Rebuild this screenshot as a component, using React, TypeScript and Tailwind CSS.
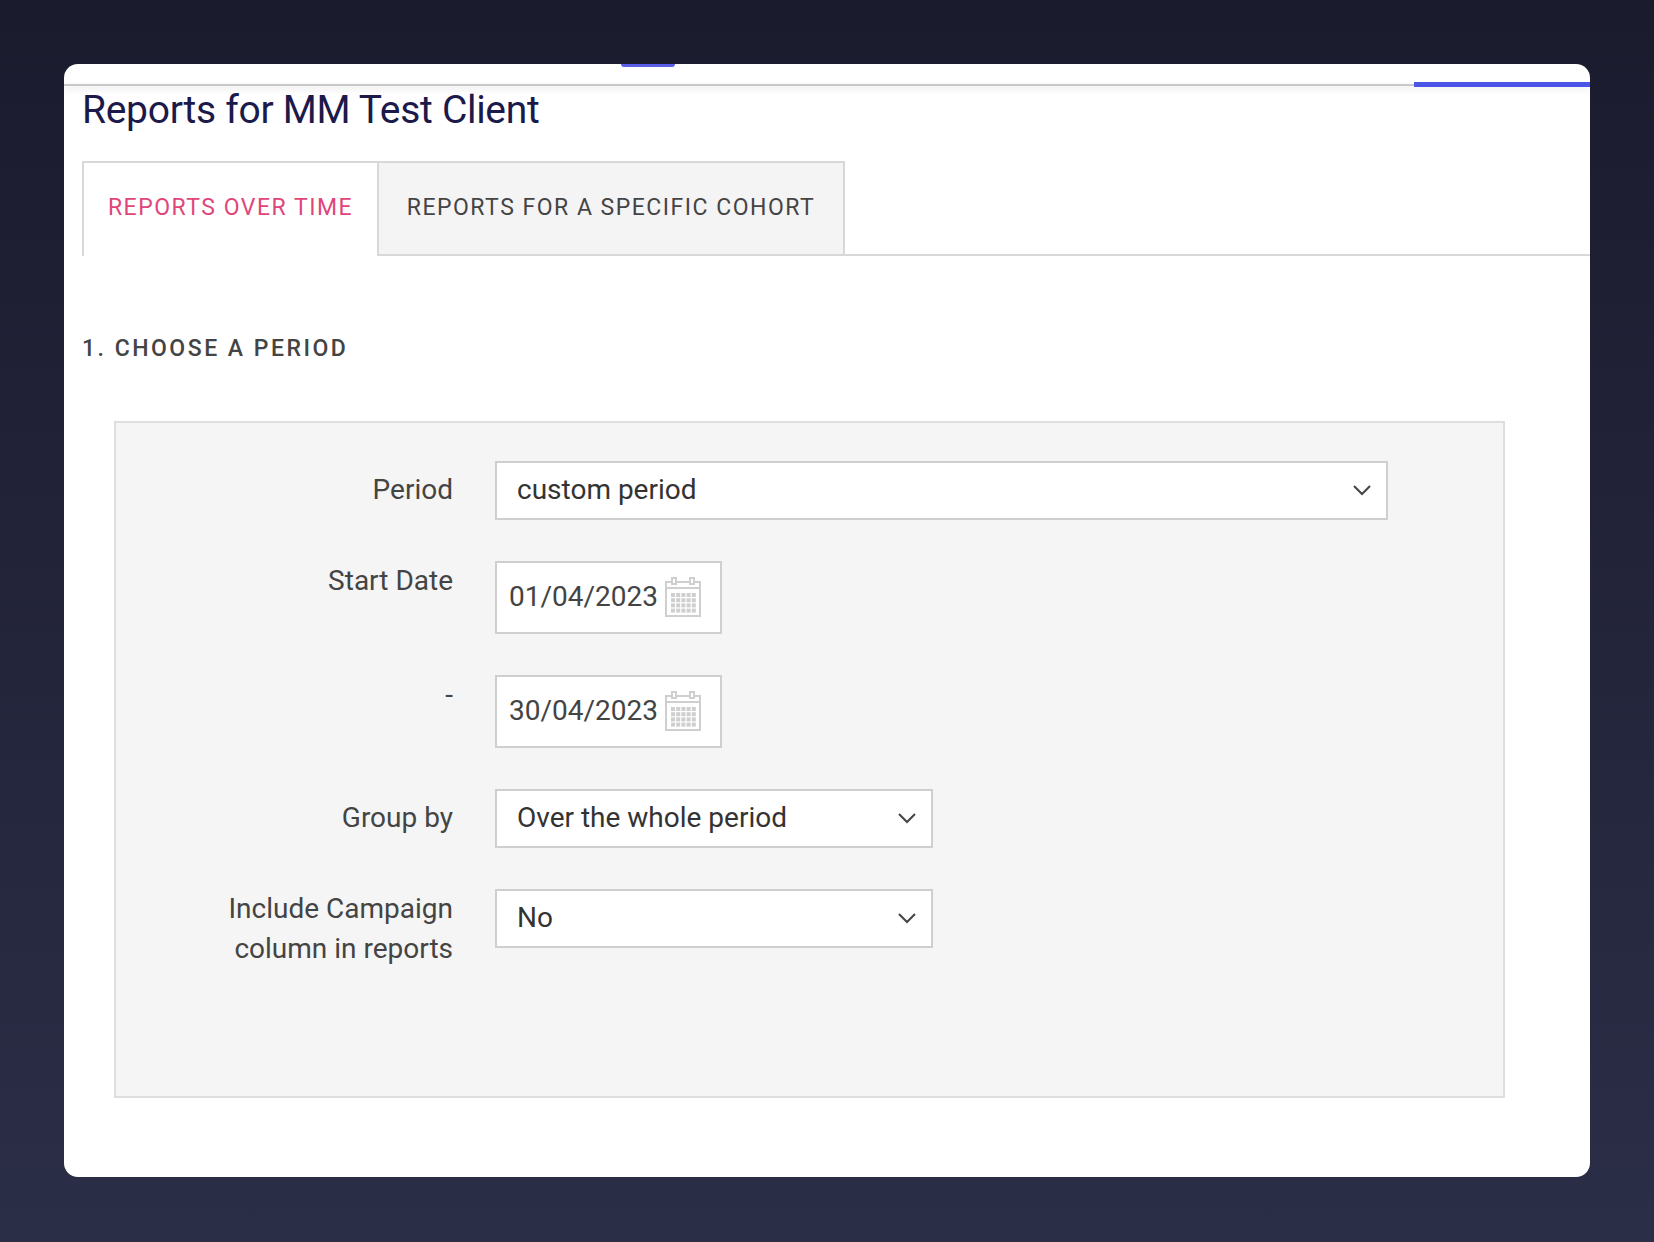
import React from "react";

const Chevron = () => (
  <svg width="20" height="12" viewBox="0 0 20 12" fill="none" stroke="#444" strokeWidth="2"><path d="M2 2l8 8 8-8" /></svg>
);

const Cal = () => (
  <svg width="38" height="42" viewBox="0 0 38 42" fill="none" stroke="#cfcfcf" strokeWidth="2">
    <rect x="2" y="6" width="34" height="34" />
    <line x1="2" y1="12" x2="36" y2="12" />
    <rect x="8" y="2" width="4" height="6" fill="#fff" />
    <rect x="26" y="2" width="4" height="6" fill="#fff" />
    <g fill="#cfcfcf" stroke="none">
      {[0, 1, 2, 3].map((r) => [0, 1, 2, 3, 4].map((c) => (
        <rect key={r + "-" + c} x={7 + c * 5.2} y={17 + r * 5.2} width="4" height="4" />
      )))}
    </g>
  </svg>
);

const Select = ({ value, w }: { value: string; w: string }) => (
  <div className={`${w} h-[59px] bg-white border-2 border-[#cfcfcf] flex items-center justify-between pl-[20px] pr-[14px] text-[28px] text-[#333]`}>
    <span>{value}</span>
    <Chevron />
  </div>
);

const DateIn = ({ value }: { value: string }) => (
  <div className="w-[227px] h-[73px] bg-white border-2 border-[#cfcfcf] flex items-center pl-[12px] gap-[6px] text-[28px] text-[#444]">
    <span>{value}</span>
    <Cal />
  </div>
);

const Row = ({ label, children, align = "items-center" }: { label: React.ReactNode; children: React.ReactNode; align?: string }) => (
  <div className={`flex ${align}`}>
    <div className="w-[379px] pr-[42px] text-right text-[28px] leading-[40px] text-[#444]">{label}</div>
    {children}
  </div>
);

export default function App() {
  return (
    <div className="w-[1654px] h-[1242px] bg-gradient-to-b from-[#1b1b2e] to-[#2b2e47] pt-[64px] pl-[64px]" style={{ fontFamily: "Roboto, 'Noto Sans', sans-serif" }}>
      <div className="relative w-[1526px] h-[1113px] bg-white rounded-[14px] overflow-hidden">
        <div className="absolute left-[557px] top-0 w-[54px] h-[3px] rounded-b bg-[#5b5ee8]" />
        <div className="mt-[20px] h-[2px] bg-[#c8c8c8] shadow-[0_3px_6px_rgba(0,0,0,0.15)] relative">
          <div className="absolute right-0 top-[-2px] w-[176px] h-[5px] bg-[#4a55e8]" />
        </div>
        <div className="pl-[18px]">
          <h1 className="text-[39px] leading-[46px] text-[#1c1a4a] mt-[1px] tracking-[-0.3px]">Reports for MM Test Client</h1>
          <div className="flex mt-[28px] border-b-2 border-[#d8d8d8] h-[95px]">
            <div className="w-[297px] border-2 border-b-0 border-[#d8d8d8] bg-white flex items-center justify-center text-[23px] tracking-[1.5px] text-[#e0457b] -mb-[2px] pb-[2px]">REPORTS OVER TIME</div>
            <div className="w-[466px] border-2 border-l-0 border-b-0 border-[#d8d8d8] bg-[#f4f4f4] flex items-center justify-center text-[23px] tracking-[1.5px] text-[#444]">REPORTS FOR A SPECIFIC COHORT</div>
          </div>
          <div className="mt-[76px] text-[23px] tracking-[2.5px] font-medium text-[#444]">1. CHOOSE A PERIOD</div>
          <div className="mt-[54px] ml-[32px] w-[1391px] h-[677px] bg-[#f5f5f5] border-2 border-[#dedede] pt-[38px] flex flex-col gap-[41px]">
            <Row label="Period"><Select value="custom period" w="w-[893px]" /></Row>
            <Row label="Start Date" align="items-start"><DateIn value="01/04/2023" /></Row>
            <Row label="-" align="items-start"><DateIn value="30/04/2023" /></Row>
            <Row label="Group by"><Select value="Over the whole period" w="w-[438px]" /></Row>
            <Row label={<>Include Campaign<br />column in reports</>} align="items-start"><Select value="No" w="w-[438px]" /></Row>
          </div>
        </div>
      </div>
    </div>
  );
}
